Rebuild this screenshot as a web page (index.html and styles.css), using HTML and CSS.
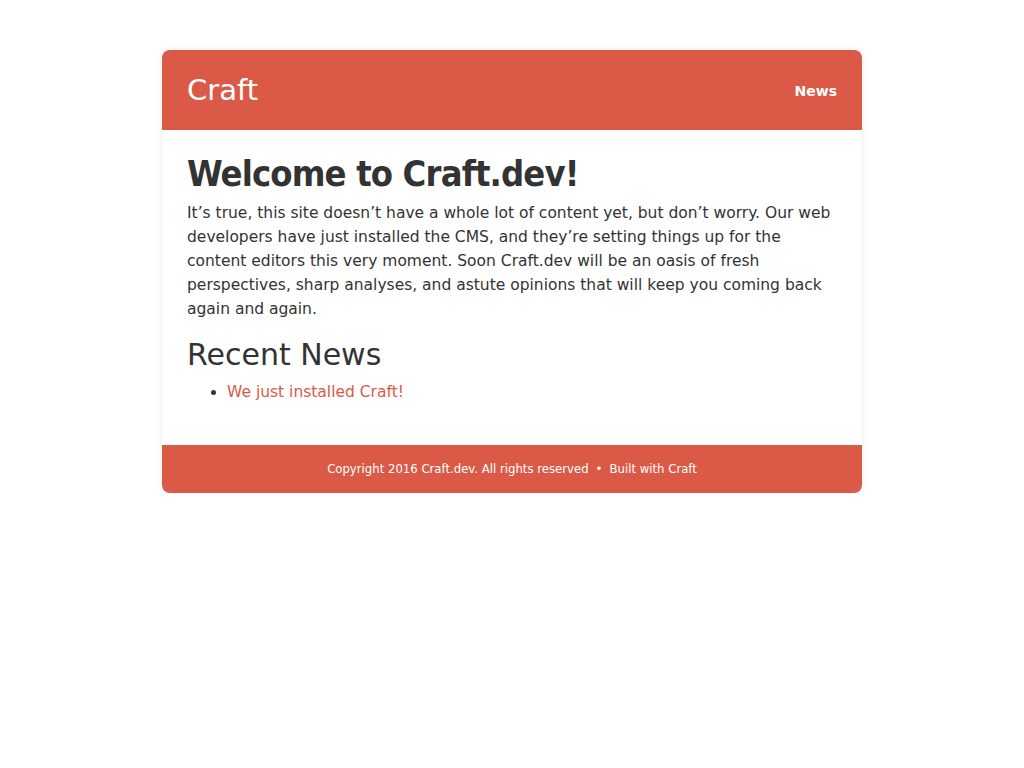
FILE: index.html
```html
<!DOCTYPE html>
<html lang="en">
<head>
<meta charset="utf-8">
<title>Craft.dev</title>
<link rel="stylesheet" href="styles.css">
</head>
<body>
<div class="page">
  <header class="site-header">
    <a class="logo" href="#">Craft</a>
    <nav class="nav"><a href="#">News</a></nav>
  </header>
  <main class="content">
    <h1 class="title">Welcome to Craft.dev!</h1>
    <p class="intro">It’s true, this site doesn’t have a whole lot of content yet, but don’t worry. Our web developers have just installed the CMS, and they’re setting things up for the content editors this very moment. Soon Craft.dev will be an oasis of fresh perspectives, sharp analyses, and astute opinions that will keep you coming back again and again.</p>
    <h2 class="subtitle">Recent News</h2>
    <ul class="news">
      <li><a href="#">We just installed Craft!</a></li>
    </ul>
  </main>
  <footer class="site-footer">Copyright 2016 Craft.dev. All rights reserved <span class="dot">•</span> Built with Craft</footer>
</div>
</body>
</html>
```
FILE: styles.css
```css
html, body {
  margin: 0;
  padding: 0;
  background: #fff;
}
body {
  font-family: "DejaVu Sans", Verdana, sans-serif;
  color: #333;
}
.page {
  width: 700px;
  margin: 50px auto 0;
  border-radius: 8px;
  background: #fff;
  box-shadow: 0 0 8px rgba(0,0,0,0.08);
}
.site-header {
  height: 80px;
  background: #da5a47;
  border-radius: 8px 8px 0 0;
  display: flex;
  align-items: center;
  justify-content: space-between;
  padding: 0 25px;
}
.logo {
  color: #fff;
  text-decoration: none;
  font-size: 29px;
  line-height: 1;
}
.nav a {
  color: #fff;
  text-decoration: none;
  font-weight: bold;
  font-size: 14px;
}
.content {
  padding: 22px 25px 41px;
}
.title {
  margin: 0;
  font-family: "DejaVu Sans Condensed", "DejaVu Sans", sans-serif;
  font-size: 36px;
  letter-spacing: -0.85px;
  line-height: 44px;
  font-weight: bold;
}
.intro {
  margin: 5px 0 0;
  font-size: 15.5px;
  line-height: 24px;
}
.subtitle {
  margin: 16px 0 7px;
  font-size: 30px;
  font-weight: normal;
  line-height: 36px;
}
.news {
  margin: 0;
  padding-left: 40px;
  font-size: 15.5px;
  line-height: 24px;
}
.news a {
  color: #da5a47;
  text-decoration: none;
}
.site-footer {
  height: 48px;
  background: #da5a47;
  border-radius: 0 0 8px 8px;
  color: #fff;
  font-size: 11.7px;
  display: flex;
  align-items: center;
  justify-content: center;
}
.dot {
  margin: 0 7px;
}
```
